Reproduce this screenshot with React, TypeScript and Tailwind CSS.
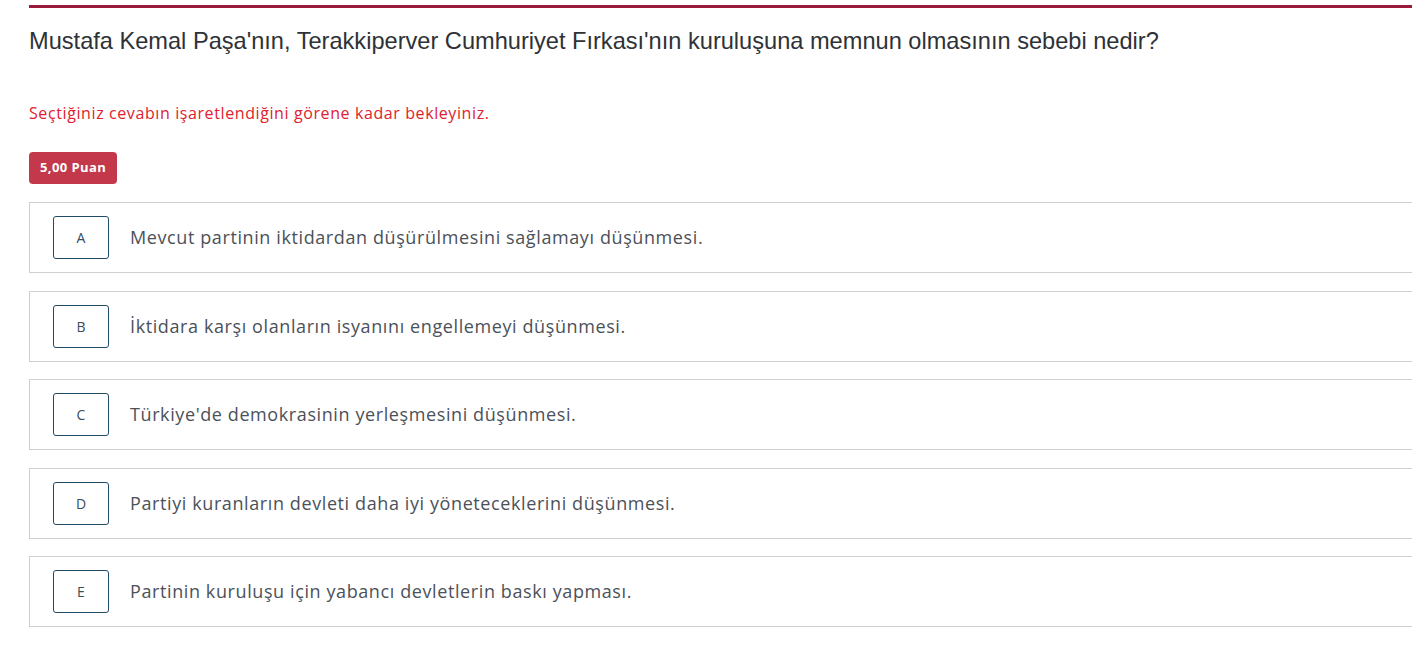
import React from 'react'

const options = [
  { key: 'A', text: 'Mevcut partinin iktidardan düşürülmesini sağlamayı düşünmesi.' },
  { key: 'B', text: 'İktidara karşı olanların isyanını engellemeyi düşünmesi.' },
  { key: 'C', text: "Türkiye'de demokrasinin yerleşmesini düşünmesi." },
  { key: 'D', text: 'Partiyi kuranların devleti daha iyi yöneteceklerini düşünmesi.' },
  { key: 'E', text: 'Partinin kuruluşu için yabancı devletlerin baskı yapması.' },
]

function App() {
  return (
    <div className="w-full h-[655px] overflow-hidden bg-white">
      <div className="pl-[29px] pt-[5px] w-[1440px]">
        <div className="h-[3px] bg-[#9c1b3d]" />
        <h1 className="mt-[19px] text-[23.6px] leading-[28px] text-[#2e3236] font-['Liberation_Sans',Arial,sans-serif]">
          Mustafa Kemal Paşa'nın, Terakkiperver Cumhuriyet Fırkası'nın kuruluşuna memnun olmasının sebebi nedir?
        </h1>
        <p className="mt-[47px] text-[16px] leading-[22px] tracking-[0.6px] text-[#e0212e] font-['Open_Sans',sans-serif]">
          Seçtiğiniz cevabın işaretlendiğini görene kadar bekleyiniz.
        </p>
        <div className="mt-[28px] inline-flex items-center h-[32px] px-[11px] rounded-[4px] bg-[#c3384b] text-white text-[13px] tracking-[0.4px] font-bold font-['Open_Sans',sans-serif]">
          5,00 Puan
        </div>
        <div className="mt-[18px] flex flex-col gap-[17.5px]">
          {options.map((o) => (
            <div key={o.key} className="flex items-center h-[71px] border border-[#cfcfcf] pl-[23px]">
              <div className="flex items-center justify-center w-[56px] h-[43px] border border-[#1f4a68] rounded-[3px] text-[14px] text-[#3b4c5c] font-['Open_Sans',sans-serif]">
                {o.key}
              </div>
              <span className="ml-[21px] text-[18px] tracking-[0.6px] text-[#4b5159] font-['Open_Sans',sans-serif]">{o.text}</span>
            </div>
          ))}
        </div>
      </div>
    </div>
  )
}

export default App
